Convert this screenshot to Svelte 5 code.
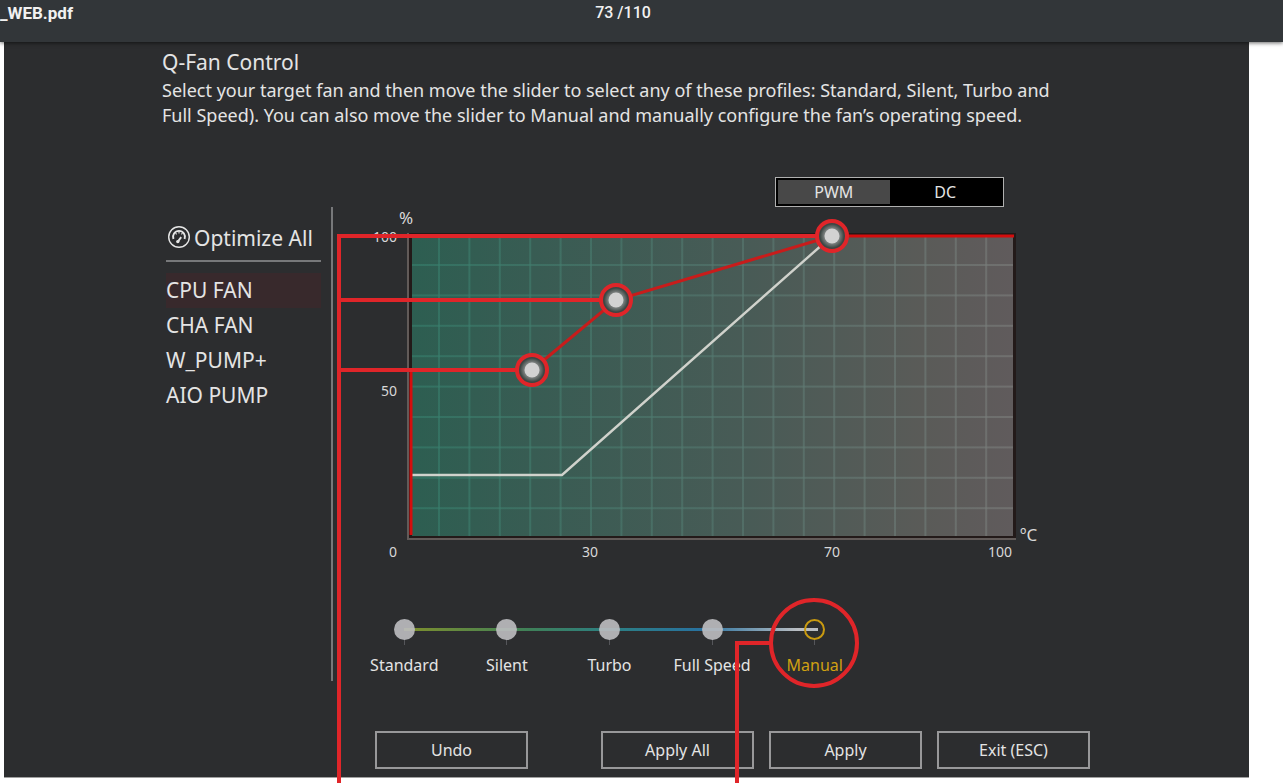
<script lang="ts">
  type Point = { x: number; y: number };

  const fans = ['CPU FAN', 'CHA FAN', 'W_PUMP+', 'AIO PUMP'];
  const profiles = ['Standard', 'Silent', 'Turbo', 'Full Speed', 'Manual'];
  const actions = ['Undo', 'Apply All', 'Apply', 'Exit (ESC)'];

  let fan = $state('CPU FAN');
  let profile = $state('Manual');
  let mode = $state('PWM');

  // plot area inside the chart's viewBox
  const plot = { left: 79, top: 29, right: 680, bottom: 329 };
  const columns = Array.from({ length: 19 }, (_, i) => 106 + i * 30.4);
  const rows = Array.from({ length: 9 }, (_, i) => 58 + i * 30.4);

  const handles: Point[] = [
    { x: 199, y: 163 },
    { x: 283, y: 93 },
    { x: 499, y: 29 },
  ];
  const curve = handles.map((p) => `${p.x},${p.y}`).join(' ');
</script>

<div class="viewer">
  <header>
    <span class="file">_WEB.pdf</span>
    <span class="pages">73 /110</span>
  </header>

  <main>
    <h1>Q-Fan Control</h1>
    <p class="intro">
      Select your target fan and then move the slider to select any of these profiles: Standard, Silent, Turbo and
      Full Speed). You can also move the slider to Manual and manually configure the fan’s operating speed.
    </p>

    <div class="body">
      <aside>
        <button class="optimize">
          <svg width="24" height="24" viewBox="0 0 24 24" fill="none" stroke="#e6e6e6" aria-hidden="true">
            <circle cx="13" cy="11" r="10.3" stroke-width="1.4" />
            <path d="M7.4 13A6 6 0 1 1 18.6 13" stroke-width="1.9" />
            <path d="M9.6 7.2l1 1.2M13 5v2.6M16.4 7.2l-1 1.2" stroke-width="1.1" />
            <path d="M11.8 15.6 15.2 11.2" stroke-width="1.9" />
            <circle cx="11.8" cy="15.6" r="1.7" fill="#e6e6e6" stroke="none" />
          </svg>
          Optimize All
        </button>
        <ul>
          {#each fans as name (name)}
            <li><button class:active={fan === name} onclick={() => (fan = name)}>{name}</button></li>
          {/each}
        </ul>
      </aside>

      <section class="work">
        <div class="modes">
          {#each ['PWM', 'DC'] as m (m)}
            <button class:on={mode === m} onclick={() => (mode = m)}>{m}</button>
          {/each}
        </div>

        <svg class="chart" viewBox="0 0 757 360" role="img" aria-label="Fan speed by temperature">
          <defs>
            <linearGradient id="heat">
              <stop offset="0" stop-color="#2d5e51" />
              <stop offset="0.2" stop-color="#385c53" />
              <stop offset="0.55" stop-color="#485b56" />
              <stop offset="0.85" stop-color="#5a5b58" />
              <stop offset="1" stop-color="#605b5c" />
            </linearGradient>
            <linearGradient id="mesh" gradientUnits="userSpaceOnUse" x1="79" y1="0" x2="680" y2="0">
              <stop offset="0" stop-color="#36806d" />
              <stop offset="0.5" stop-color="#547970" />
              <stop offset="1" stop-color="#7c7e7c" />
            </linearGradient>
            <radialGradient id="halo">
              <stop offset="0.55" stop-color="#8c8f8e" />
              <stop offset="1" stop-color="#3c4744" />
            </radialGradient>
          </defs>

          <rect x="76" y="26" width="607" height="305" fill="#231a19" />
          <rect x={plot.left} y={plot.top} width={plot.right - plot.left} height={plot.bottom - plot.top} fill="url(#heat)" />
          <g fill="url(#mesh)">
            {#each columns as x}
              <rect x={x - 1} y={plot.top} width="2" height={plot.bottom - plot.top} opacity="0.6" />
            {/each}
            {#each rows as y}
              <rect x={plot.left} y={y - 1} width={plot.right - plot.left} height="2" opacity="0.6" />
            {/each}
          </g>
          <path d="M75 26V332H683" fill="none" stroke="#625b59" stroke-width="2" />

          <g class="labels">
            <text x="66" y="17" class="unit">%</text>
            <text x="64" y="35" text-anchor="end">100</text>
            <text x="64" y="189" text-anchor="end">50</text>
            <text x="60" y="350" text-anchor="middle">0</text>
            <text x="257" y="350" text-anchor="middle">30</text>
            <text x="499" y="350" text-anchor="middle">70</text>
            <text x="667" y="350" text-anchor="middle">100</text>
            <text x="687" y="334" class="unit">ºC</text>
          </g>

          <polyline points="79,268 229,268 499,29" fill="none" stroke="#d0d2cc" stroke-width="2.4" />
          <path d="M78 163V328M499 29H681" fill="none" stroke="#d40d0d" stroke-width="3" />
          <polyline points={curve} fill="none" stroke="#c81c1b" stroke-width="3" />

          <!-- callout lines run on past the dialog and are cut off by the viewer -->
          <path d="M6 2000V29H484M6 93H268M6 163H184" fill="none" stroke="#e02529" stroke-width="4" />
          {#each handles as p}
            <circle cx={p.x} cy={p.y} r="15" fill="#3c4744" stroke="#e02529" stroke-width="4" />
            <circle cx={p.x} cy={p.y} r="12" fill="url(#halo)" />
            <circle cx={p.x} cy={p.y} r="7.5" fill="#d2d2d2" />
          {/each}
        </svg>

        <div class="profiles" role="radiogroup" aria-label="Fan profile">
          {#each profiles as name (name)}
            <label class:manual={name === 'Manual'}>
              <input type="radio" name="profile" value={name} bind:group={profile} />
              <span>{name}</span>
            </label>
          {/each}
        </div>

        <div class="actions">
          {#each actions as name (name)}
            <button>{name}</button>
          {/each}
        </div>
      </section>
    </div>
  </main>
</div>

<style>
  :global(body) {
    margin: 0;
    background: #fff;
  }
  .viewer {
    box-sizing: border-box;
    min-height: 100vh;
    overflow: hidden;
    font-family: 'Noto Sans', sans-serif;
    color: #e4e4e4;
  }
  button {
    margin: 0;
    padding: 0;
    border: 0;
    background: none;
    color: inherit;
    font: inherit;
    cursor: pointer;
  }
  header {
    position: relative;
    display: grid;
    grid-template-columns: 1fr auto 1fr;
    height: 42px;
    padding-right: 37px;
    background: #323639;
    box-shadow: 0 1px 4px rgba(0, 0, 0, 0.6);
    font-family: Roboto, sans-serif;
    line-height: 26px;
    color: #f1f1f1;
  }
  .file {
    font-size: 17px;
    font-weight: 700;
  }
  .pages {
    font-size: 16px;
    font-weight: 500;
  }
  main {
    margin: 0 34px 0 4px;
    padding: 6px 159px 8px 158px;
    background: #2c2d2f;
    border-bottom: 1px solid #a0a0a0;
  }
  h1 {
    margin: 0;
    font-size: 21px;
    font-weight: 400;
    line-height: 28px;
  }
  .intro {
    max-width: 910px;
    margin: 2px 0 49px;
    font-size: 18px;
    line-height: 25px;
  }
  .body {
    display: flex;
  }
  aside {
    box-sizing: border-box;
    flex: 0 0 171px;
    height: 474px;
    margin-top: 30px;
    padding: 14px 10px 0 4px;
    border-right: 2px solid #77787a;
    font-size: 21px;
  }
  .optimize {
    display: flex;
    align-items: center;
    gap: 4px;
    width: 100%;
    height: 41px;
    padding-bottom: 6px;
    border-bottom: 2px solid #77787a;
    white-space: nowrap;
  }
  ul {
    margin: 11px 0 0;
    padding: 0;
    list-style: none;
  }
  li button {
    display: block;
    width: 100%;
    line-height: 35px;
    text-align: left;
  }
  li .active {
    background: #38292c;
  }
  .work {
    flex: 1;
    min-width: 0;
  }
  .modes {
    box-sizing: border-box;
    display: flex;
    width: 229px;
    height: 30px;
    margin: 0 86px 0 auto;
    padding: 2px;
    border: 1px solid #b0b0b0;
    background: #000;
    font-size: 16px;
  }
  .modes button {
    flex: 1;
    line-height: 24px;
  }
  .modes .on {
    background: #484848;
  }
  .chart {
    display: block;
    width: 100%;
    overflow: visible;
    pointer-events: none;
  }
  .labels {
    fill: #d8d8d8;
    font-size: 14px;
  }
  .labels .unit {
    font-size: 17px;
  }
  .profiles {
    position: relative;
    display: grid;
    grid-template-columns: repeat(5, 1fr);
    width: 513px;
    margin: 52px 0 0 20px;
  }
  .profiles::before {
    content: '';
    position: absolute;
    left: 51px;
    right: 48px;
    top: 9px;
    height: 3px;
    background: linear-gradient(90deg, #7f8f2c, #3f8058 30%, #2c7f83 50%, #28719f 72%, #b9bdc2 95%);
  }
  .profiles label {
    position: relative;
    display: flex;
    flex-direction: column;
    align-items: center;
    gap: 13px;
    font-size: 16px;
    line-height: 24px;
    white-space: nowrap;
  }
  .profiles label::before {
    content: '';
    position: absolute;
    top: 20px;
    width: 1px;
    height: 6px;
    background: #55565a;
  }
  .profiles input {
    appearance: none;
    position: relative;
    box-sizing: border-box;
    width: 21px;
    height: 21px;
    margin: 0;
    border-radius: 50%;
    background: rgba(190, 190, 193, 0.9);
  }
  .profiles input:checked {
    border: 2px solid #c99a10;
    background: none;
  }
  .profiles input:checked + span {
    color: #d0a012;
  }
  /* callout ring and its leader line */
  .manual::after {
    content: '';
    position: absolute;
    left: 6px;
    top: -21px;
    box-sizing: border-box;
    width: 90px;
    height: 90px;
    border: 4px solid #e02529;
    border-radius: 50%;
    pointer-events: none;
  }
  .manual span::after {
    content: '';
    position: absolute;
    left: -28px;
    top: 22px;
    width: 32px;
    height: 900px;
    border: solid #e02529;
    border-width: 4px 0 0 4px;
    pointer-events: none;
  }
  .actions {
    display: flex;
    gap: 15px;
    margin: 54px 0 0 42px;
    font-size: 16px;
  }
  .actions button {
    flex: 1;
    height: 38px;
    border: 2px solid #98989a;
  }
  .actions button:first-child {
    margin-right: 58px;
  }
</style>
